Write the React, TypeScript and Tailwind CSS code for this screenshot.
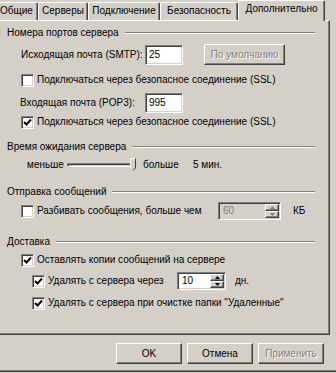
import React from 'react';

const raised =
  'border border-t-white border-l-white border-r-[#404040] border-b-[#404040] shadow-[inset_-1px_-1px_0_#808080] bg-[#d4d0c8]';
const sunken =
  'border border-t-[#808080] border-l-[#808080] border-r-white border-b-white shadow-[inset_1px_1px_0_#404040,inset_-1px_-1px_0_#d4d0c8]';
const disabledText = 'text-[#808080] [text-shadow:1px_1px_0_#ffffff]';

function CheckBox({ checked }: { checked?: boolean }) {
  return (
    <span className={`flex h-[13px] w-[13px] shrink-0 items-center justify-center bg-white ${sunken}`}>
      {checked && (
        <svg width="9" height="9" viewBox="0 0 9 9">
          <path d="M1 4 L3.5 6.5 L8 1.5" fill="none" stroke="#000" strokeWidth="1.9" />
        </svg>
      )}
    </span>
  );
}

function GroupTitle({ title }: { title: string }) {
  return (
    <div className="flex h-[14px] items-center">
      <span className="whitespace-nowrap leading-none">{title}</span>
      <div className="ml-[6px] h-[2px] flex-1 border-t border-b border-t-[#808080] border-b-white" />
    </div>
  );
}

function Arrow({ up, disabled }: { up?: boolean; disabled?: boolean }) {
  return (
    <svg width="5" height="3" viewBox="0 0 5 3" className="block">
      <path d={up ? 'M2.5 0 L5 3 L0 3 Z' : 'M0 0 L5 0 L2.5 3 Z'} fill={disabled ? '#808080' : '#000'} />
    </svg>
  );
}

function Spin({ value, disabled }: { value: string; disabled?: boolean }) {
  return (
    <div className={`flex h-[18px] w-full items-stretch ${disabled ? 'bg-[#d4d0c8]' : 'bg-white'} ${sunken} p-[1px]`}>
      <span className={`flex flex-1 items-center pl-[3px] leading-none ${disabled ? 'text-[#808080]' : ''}`}>{value}</span>
      <div className="flex w-[14px] flex-col">
        <div className={`flex flex-1 items-center justify-center ${raised}`}>
          <Arrow up disabled={disabled} />
        </div>
        <div className={`flex flex-1 items-center justify-center ${raised}`}>
          <Arrow disabled={disabled} />
        </div>
      </div>
    </div>
  );
}

const tabs = [
  { label: 'Общие', cls: 'w-[43px] ml-[-5px]' },
  { label: 'Серверы', cls: 'w-[50px]' },
  { label: 'Подключение', cls: 'w-[72px]' },
  { label: 'Безопасность', cls: 'w-[78px]' },
];

export default function App() {
  return (
    <div className="relative h-[373px] w-[336px] overflow-hidden bg-[#d4d0c8] font-['Liberation_Sans',Arial,sans-serif] text-[10px] text-black">
      {/* вкладки */}
      <div className="flex h-[20px] items-end">
        {tabs.map((t) => (
          <div
            key={t.label}
            className={`flex h-[18px] shrink-0 items-center justify-center rounded-t-[2px] border-t border-l border-r border-t-white border-l-white border-r-[#404040] shadow-[inset_-1px_0_0_#808080] pb-[2px] leading-none ${t.cls}`}
          >
            {t.label}
          </div>
        ))}
        <div className="relative z-10 -mb-px flex h-[21px] w-[87px] shrink-0 items-center justify-center rounded-t-[2px] border-t border-l border-r border-t-white border-l-white border-r-[#404040] bg-[#d4d0c8] pb-[4px] leading-none shadow-[inset_-1px_0_0_#808080]">
          Дополнительно
        </div>
      </div>

      {/* панель */}
      <div className={`ml-[-3px] flex h-[315px] w-[333px] flex-col pl-[9px] pr-[14px] ${raised}`}>
        <div className="mt-[5px]">
          <GroupTitle title="Номера портов сервера" />
        </div>

        <div className="mt-[4px] flex h-[21px] items-center pl-[14px]">
          <span className="w-[124px] whitespace-nowrap leading-none">Исходящая почта (SMTP):</span>
          <div className={`flex h-[20px] w-[38px] items-center bg-white pl-[3px] ${sunken}`}>25</div>
          <div className={`ml-[21px] flex h-[21px] w-[81px] items-center justify-center ${raised} ${disabledText}`}>
            По умолчанию
          </div>
        </div>

        <div className="mt-[8px] flex h-[14px] items-center pl-[14px]">
          <CheckBox />
          <span className="ml-[3px] whitespace-nowrap leading-none">Подключаться через безопасное соединение (SSL)</span>
        </div>

        <div className="mt-[5px] flex h-[21px] items-center pl-[13px]">
          <span className="w-[125px] whitespace-nowrap leading-none">Входящая почта (POP3):</span>
          <div className={`flex h-[20px] w-[38px] items-center bg-white pl-[3px] ${sunken}`}>995</div>
        </div>

        <div className="mt-[2px] flex h-[14px] items-center pl-[14px]">
          <CheckBox checked />
          <span className="ml-[3px] whitespace-nowrap leading-none">Подключаться через безопасное соединение (SSL)</span>
        </div>

        <div className="mt-[11px]">
          <GroupTitle title="Время ожидания сервера" />
        </div>

        <div className="mt-[2px] flex h-[18px] items-center pl-[20px]">
          <span className="w-[40px] whitespace-nowrap leading-none">меньше</span>
          <div className="relative flex h-[18px] w-[69px] items-center">
            <div className="h-[4px] w-[66px] border border-t-[#808080] border-l-[#808080] border-r-white border-b-white bg-[#d4d0c8] shadow-[inset_1px_1px_0_#404040]" />
            <svg width="6" height="13" viewBox="0 0 6 13" className="absolute right-0 top-[2px]">
              <path d="M0.5 0.5 H5.5 V10 L3 12.5 L0.5 10 Z" fill="#d4d0c8" />
              <path d="M0.5 10 V0.5 H5" fill="none" stroke="#fff" />
              <path d="M5.5 0.5 V10 L3 12.5" fill="none" stroke="#404040" />
            </svg>
          </div>
          <span className="ml-[7px] w-[50px] whitespace-nowrap leading-none">больше</span>
          <span className="whitespace-nowrap leading-none">5 мин.</span>
        </div>

        <div className="mt-[11px]">
          <GroupTitle title="Отправка сообщений" />
        </div>

        <div className="mt-[2px] flex h-[20px] items-center pl-[14px]">
          <CheckBox />
          <span className="ml-[3px] w-[181px] whitespace-nowrap leading-none">Разбивать сообщения, больше чем</span>
          <div className="w-[63px]">
            <Spin value="60" disabled />
          </div>
          <span className="ml-[12px] leading-none">КБ</span>
        </div>

        <div className="mt-[14px]">
          <GroupTitle title="Доставка" />
        </div>

        <div className="mt-[4px] flex h-[14px] items-center pl-[14px]">
          <CheckBox checked />
          <span className="ml-[3px] whitespace-nowrap leading-none">Оставлять копии сообщений на сервере</span>
        </div>

        <div className="mt-[4px] flex h-[20px] items-center pl-[25px]">
          <CheckBox checked />
          <span className="ml-[3px] w-[129px] whitespace-nowrap leading-none">Удалять с сервера через</span>
          <div className="w-[49px]">
            <Spin value="10" />
          </div>
          <span className="ml-[9px] leading-none">дн.</span>
        </div>

        <div className="mt-[5px] flex h-[14px] items-center pl-[25px]">
          <CheckBox checked />
          <span className="ml-[3px] whitespace-nowrap leading-none">
            Удалять с сервера при очистке папки "Удаленные"
          </span>
        </div>
      </div>

      {/* кнопки */}
      <div className="ml-[116px] mt-[8px] flex h-[21px] gap-[5px]">
        <div className={`flex h-[21px] w-[66px] items-center justify-center ${raised}`}>OK</div>
        <div className={`flex h-[21px] w-[66px] items-center justify-center ${raised}`}>Отмена</div>
        <div className={`flex h-[21px] w-[66px] items-center justify-center ${raised} ${disabledText}`}>Применить</div>
      </div>

      <div className="mt-[6px] h-[1px] bg-[#808080]" />
      <div className="h-[1px] bg-[#404040]" />
    </div>
  );
}
